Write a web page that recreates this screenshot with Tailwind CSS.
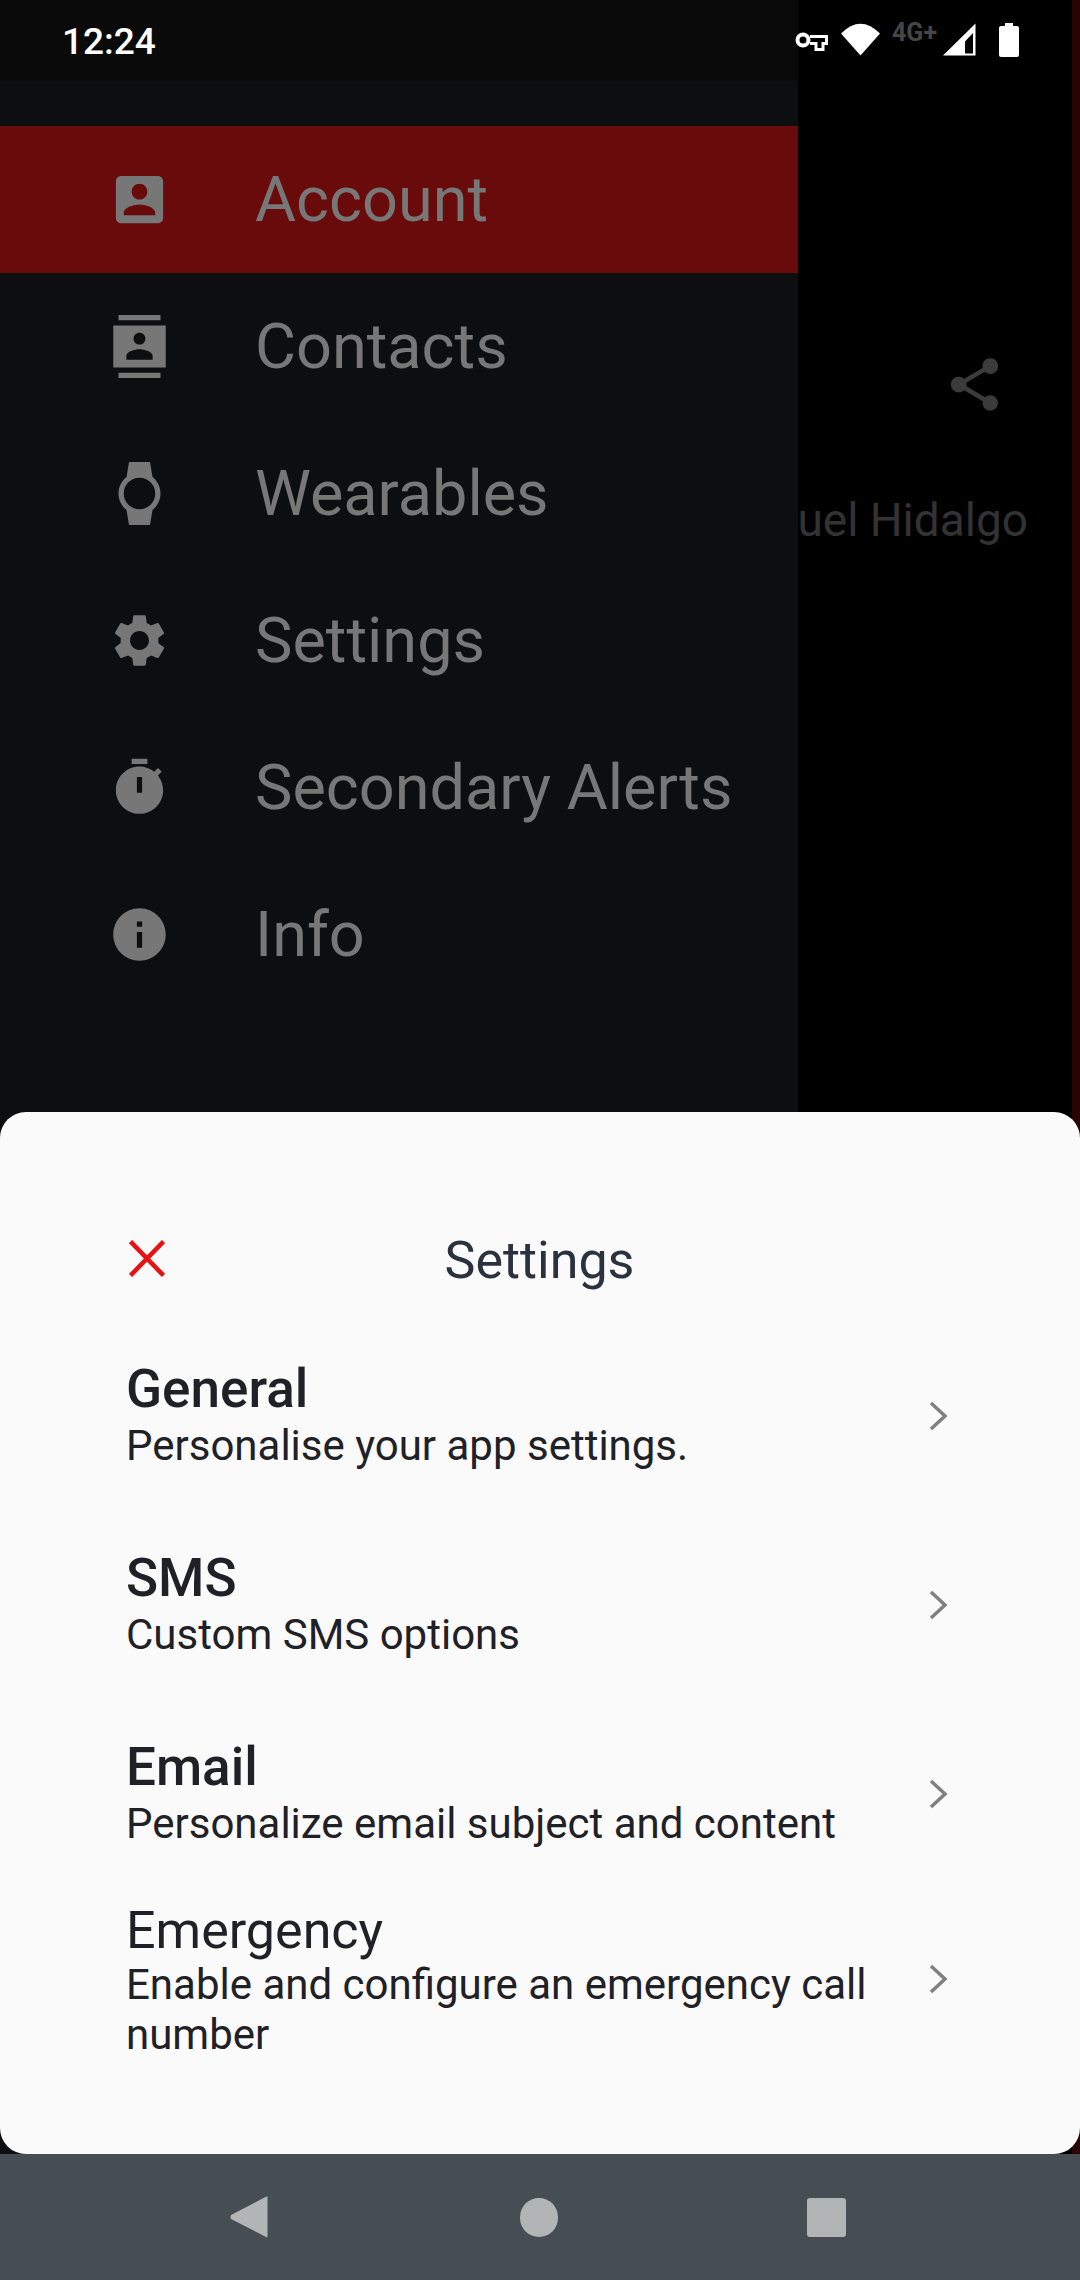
<!DOCTYPE html>
<html lang="en">
<head>
  <meta charset="UTF-8" />
  <title>Settings</title>
  <meta name="viewport" content="width=device-width, initial-scale=1.0">
  <script src="https://cdn.jsdelivr.net/npm/@tailwindcss/browser@4"></script>
</head>
<body class="bg-black font-['Roboto',sans-serif]">
  <div class="w-[1080px] h-[2280px] flex flex-col overflow-hidden">
    <div class="relative h-[2154px] bg-black">

      <!-- status bar icons -->
      <div class="absolute top-0 right-0 w-[282px] h-[81px] z-30">
        <svg class="absolute left-0 top-0 overflow-visible" width="282" height="81" viewBox="798 0 282 81" fill="#fff">
          <circle cx="803" cy="40" r="5.500" fill="none" stroke="#fff" stroke-width="4"/>
          <path d="M810 36.500H826.500V43.500H823V49.500H816V43.500H810" fill="none" stroke="#fff" stroke-width="3"/>
          <path d="M841 33.500Q860.500 14 880 33.500L860.500 55.500z"/>
          <path fill-rule="evenodd" d="M975.500 23.500V55.500H943zM965 53.500h8V33l-8 8.500z"/>
          <path d="M1005 23h8v3h4a2 2 0 0 1 2 2v27a2 2 0 0 1-2 2h-16a2 2 0 0 1-2-2V28a2 2 0 0 1 2-2h4z"/>
        </svg>
        <span class="absolute left-[94px] top-[18px] text-[25px] leading-[29px] font-bold text-[#464646]">4G+</span>
      </div>

      <!-- screen behind the drawer -->
      <div class="absolute right-0 top-0 bottom-0 w-[8px] bg-[#2a0305]"></div>
      <svg class="absolute left-[943px] top-[353px]" width="63" height="63" viewBox="0 0 24 24" fill="#3b3b3b"><path d="M18 16.080c-.76 0-1.440.3-1.960.77L8.910 12.700c.05-.23.09-.46.09-.7s-.04-.47-.09-.7l7.050-4.110c.54.5 1.250.81 2.040.81 1.660 0 3-1.340 3-3s-1.340-3-3-3-3 1.340-3 3c0 .24.04.47.09.7L8.040 9.810C7.500 9.310 6.790 9 6 9c-1.660 0-3 1.340-3 3s1.340 3 3 3c.79 0 1.500-.31 2.040-.81l7.120 4.160c-.05.21-.08.43-.08.65 0 1.610 1.310 2.920 2.920 2.920 1.610 0 2.920-1.310 2.920-2.920s-1.310-2.920-2.920-2.920z"/></svg>
      <p class="absolute right-[52px] top-[490px] text-[46px] leading-[60px] text-[#333333] whitespace-nowrap">uel Hidalgo</p>

      <!-- drawer -->
      <aside class="absolute left-0 top-0 bottom-0 w-[798px] bg-[#0d0e10] z-10">
        <div class="h-[81px] bg-[#0a0a0a] pl-[62px] pt-[21px] text-[37px] leading-[41px] font-medium text-white">12:24</div>
        <nav class="pt-[45px] text-[#777777] text-[63px] leading-[147px]">
          <a class="flex items-center h-[147px] bg-[#690a0b]">
            <span class="w-[108px] pl-[108px] flex"><svg class="shrink-0" width="63" height="63" viewBox="0 0 24 24" fill="currentColor"><path d="M3 5v14c0 1.100.89 2 2 2h14c1.100 0 2-.9 2-2V5c0-1.100-.9-2-2-2H5c-1.110 0-2 .9-2 2zm12 4c0 1.660-1.340 3-3 3s-3-1.340-3-3 1.340-3 3-3 3 1.340 3 3zm-9 8c0-2 4-3.100 6-3.100s6 1.100 6 3.100v1H6v-1z"/></svg></span>
            <span class="ml-[147px]">Account</span>
          </a>
          <a class="flex items-center h-[147px]">
            <span class="w-[108px] pl-[108px] flex"><svg class="shrink-0" width="63" height="63" viewBox="0 0 24 24" fill="currentColor"><path d="M20 0H4v2h16V0zM4 24h16v-2H4v2zM22 4H2v16h20V4zm-10 2.750c1.240 0 2.250 1.010 2.250 2.250s-1.010 2.250-2.250 2.250S9.750 10.240 9.750 9 10.760 6.750 12 6.750zM17 17H7v-1.500c0-1.670 3.330-2.500 5-2.500s5 .83 5 2.500V17z"/></svg></span>
            <span class="ml-[147px]">Contacts</span>
          </a>
          <a class="flex items-center h-[147px]">
            <span class="w-[108px] pl-[108px] flex"><svg class="shrink-0" width="63" height="63" viewBox="0 0 24 24" fill="currentColor"><path d="M20 12c0-2.540-1.190-4.810-3.040-6.270L16 0H8l-.95 5.730C5.190 7.190 4 9.450 4 12s1.190 4.810 3.050 6.270L8 24h8l.96-5.730C18.810 16.810 20 14.540 20 12zM6 12c0-3.310 2.690-6 6-6s6 2.690 6 6-2.690 6-6 6-6-2.690-6-6z"/></svg></span>
            <span class="ml-[147px]">Wearables</span>
          </a>
          <a class="flex items-center h-[147px]">
            <span class="w-[108px] pl-[108px] flex"><svg class="shrink-0" width="63" height="63" viewBox="0 0 24 24" fill="currentColor"><path d="M19.140 12.940c.04-.3.06-.61.06-.94 0-.32-.02-.64-.07-.94l2.030-1.580c.18-.14.23-.41.12-.61l-1.920-3.320c-.12-.22-.37-.29-.59-.22l-2.390.96c-.5-.38-1.030-.7-1.620-.94l-.36-2.540c-.04-.24-.24-.41-.48-.41h-3.840c-.24 0-.43.17-.47.41l-.36 2.540c-.59.24-1.130.57-1.620.94l-2.390-.96c-.22-.08-.47 0-.59.22L2.740 8.870c-.12.21-.08.47.12.61l2.030 1.580c-.05.3-.09.63-.09.94s.02.64.07.94l-2.030 1.580c-.18.14-.23.41-.12.61l1.920 3.320c.12.22.37.29.59.22l2.390-.96c.5.38 1.030.7 1.620.94l.36 2.540c.05.24.24.41.48.41h3.840c.24 0 .44-.17.47-.41l.36-2.540c.59-.24 1.130-.56 1.620-.94l2.390.96c.22.08.47 0 .59-.22l1.920-3.320c.12-.22.07-.47-.12-.61l-2.010-1.580zM12 15.600c-1.980 0-3.600-1.620-3.600-3.600s1.620-3.600 3.600-3.600 3.600 1.620 3.600 3.600-1.620 3.600-3.600 3.600z"/></svg></span>
            <span class="ml-[147px]">Settings</span>
          </a>
          <a class="flex items-center h-[147px]">
            <span class="w-[108px] pl-[108px] flex"><svg class="shrink-0" width="63" height="63" viewBox="0 0 24 24" fill="currentColor" fill-rule="evenodd"><path d="M15 1H9v2h6V1zm-4 13h2V8h-2v6zm8.030-6.610l1.420-1.420c-.43-.51-.9-.99-1.410-1.410l-1.420 1.420C16.070 4.740 14.120 4 12 4c-4.970 0-9 4.030-9 9s4.020 9 9 9 9-4.030 9-9c0-2.120-.74-4.070-1.970-5.610z"/></svg></span>
            <span class="ml-[147px]">Secondary Alerts</span>
          </a>
          <a class="flex items-center h-[147px]">
            <span class="w-[108px] pl-[108px] flex"><svg class="shrink-0" width="63" height="63" viewBox="0 0 24 24" fill="currentColor"><path d="M12 2C6.480 2 2 6.480 2 12s4.480 10 10 10 10-4.480 10-10S17.520 2 12 2zm1 15h-2v-6h2v6zm0-8h-2V7h2v2z"/></svg></span>
            <span class="ml-[147px]">Info</span>
          </a>
        </nav>
      </aside>

      <!-- bottom sheet -->
      <section class="absolute left-0 right-0 bottom-0 h-[1042px] bg-[#fafafa] rounded-[26px] z-20 flex flex-col">
        <header class="relative h-[209px] flex items-center justify-center pt-[119px] pb-[30px] text-[52px] leading-[56px] text-[#2b323d]">
          <svg class="absolute left-[129px] top-[128px]" width="36" height="37" viewBox="0 0 36 37" fill="none" stroke="#e81212" stroke-width="4.500"><path d="M1.500 1.500L34.500 35.500M34.500 1.500L1.500 35.500"/></svg>
          <h2 class="ml-[-1px]">Settings</h2>
        </header>

        <a class="flex items-center h-[189px] pl-[126px] pr-[129px] justify-between">
          <div>
            <p class="text-[53px] leading-[58px] mb-[3px] font-medium text-[#1f2126]">General</p>
            <p class="text-[42px] leading-[50px] text-[#1f2126]">Personalise your app settings.</p>
          </div>
          <svg width="24" height="30" viewBox="0 0 24 30" fill="none" stroke="#808080" stroke-width="3.500"><path d="M4 2L18 15L4 28"/></svg>
        </a>
        <a class="flex items-center h-[189px] pl-[126px] pr-[129px] justify-between">
          <div>
            <p class="text-[53px] leading-[58px] mb-[3px] font-medium text-[#1f2126]">SMS</p>
            <p class="text-[42px] leading-[50px] text-[#1f2126]">Custom SMS options</p>
          </div>
          <svg width="24" height="30" viewBox="0 0 24 30" fill="none" stroke="#808080" stroke-width="3.500"><path d="M4 2L18 15L4 28"/></svg>
        </a>
        <a class="flex items-center h-[189px] pl-[126px] pr-[129px] justify-between">
          <div>
            <p class="text-[53px] leading-[58px] mb-[3px] font-medium text-[#1f2126]">Email</p>
            <p class="text-[42px] leading-[50px] text-[#1f2126]">Personalize email subject and content</p>
          </div>
          <svg width="24" height="30" viewBox="0 0 24 30" fill="none" stroke="#808080" stroke-width="3.500"><path d="M4 2L18 15L4 28"/></svg>
        </a>
        <a class="flex items-center pt-[9px] pl-[126px] pr-[129px] justify-between">
          <div class="w-[780px] pt-[5px]">
            <p class="text-[52px] leading-[58px] text-[#1f2126]">Emergency</p>
            <p class="text-[42px] leading-[50px] text-[#1f2126]">Enable and configure an emergency call number</p>
          </div>
          <svg width="24" height="30" viewBox="0 0 24 30" fill="none" stroke="#808080" stroke-width="3.500"><path d="M4 2L18 15L4 28"/></svg>
        </a>
      </section>
    </div>

    <!-- navigation bar -->
    <footer class="h-[126px] bg-[#464d53] flex items-center pl-[230px] gap-[252px]">
      <svg width="38" height="42" viewBox="0 0 38 42" fill="#b1b5b6"><path d="M37.500 1.500V40.500Q37.500 42 36 41L1 23Q0 21 1 19L35.500 1Q37.500 0 37.500 1.500z"/></svg>
      <div class="w-[38px] h-[39px] rounded-full bg-[#b1b5b6]"></div>
      <div class="w-[39px] h-[39px] rounded-[3px] bg-[#b1b5b6] ml-[-3px]"></div>
    </footer>
  </div>
</body>
</html>
